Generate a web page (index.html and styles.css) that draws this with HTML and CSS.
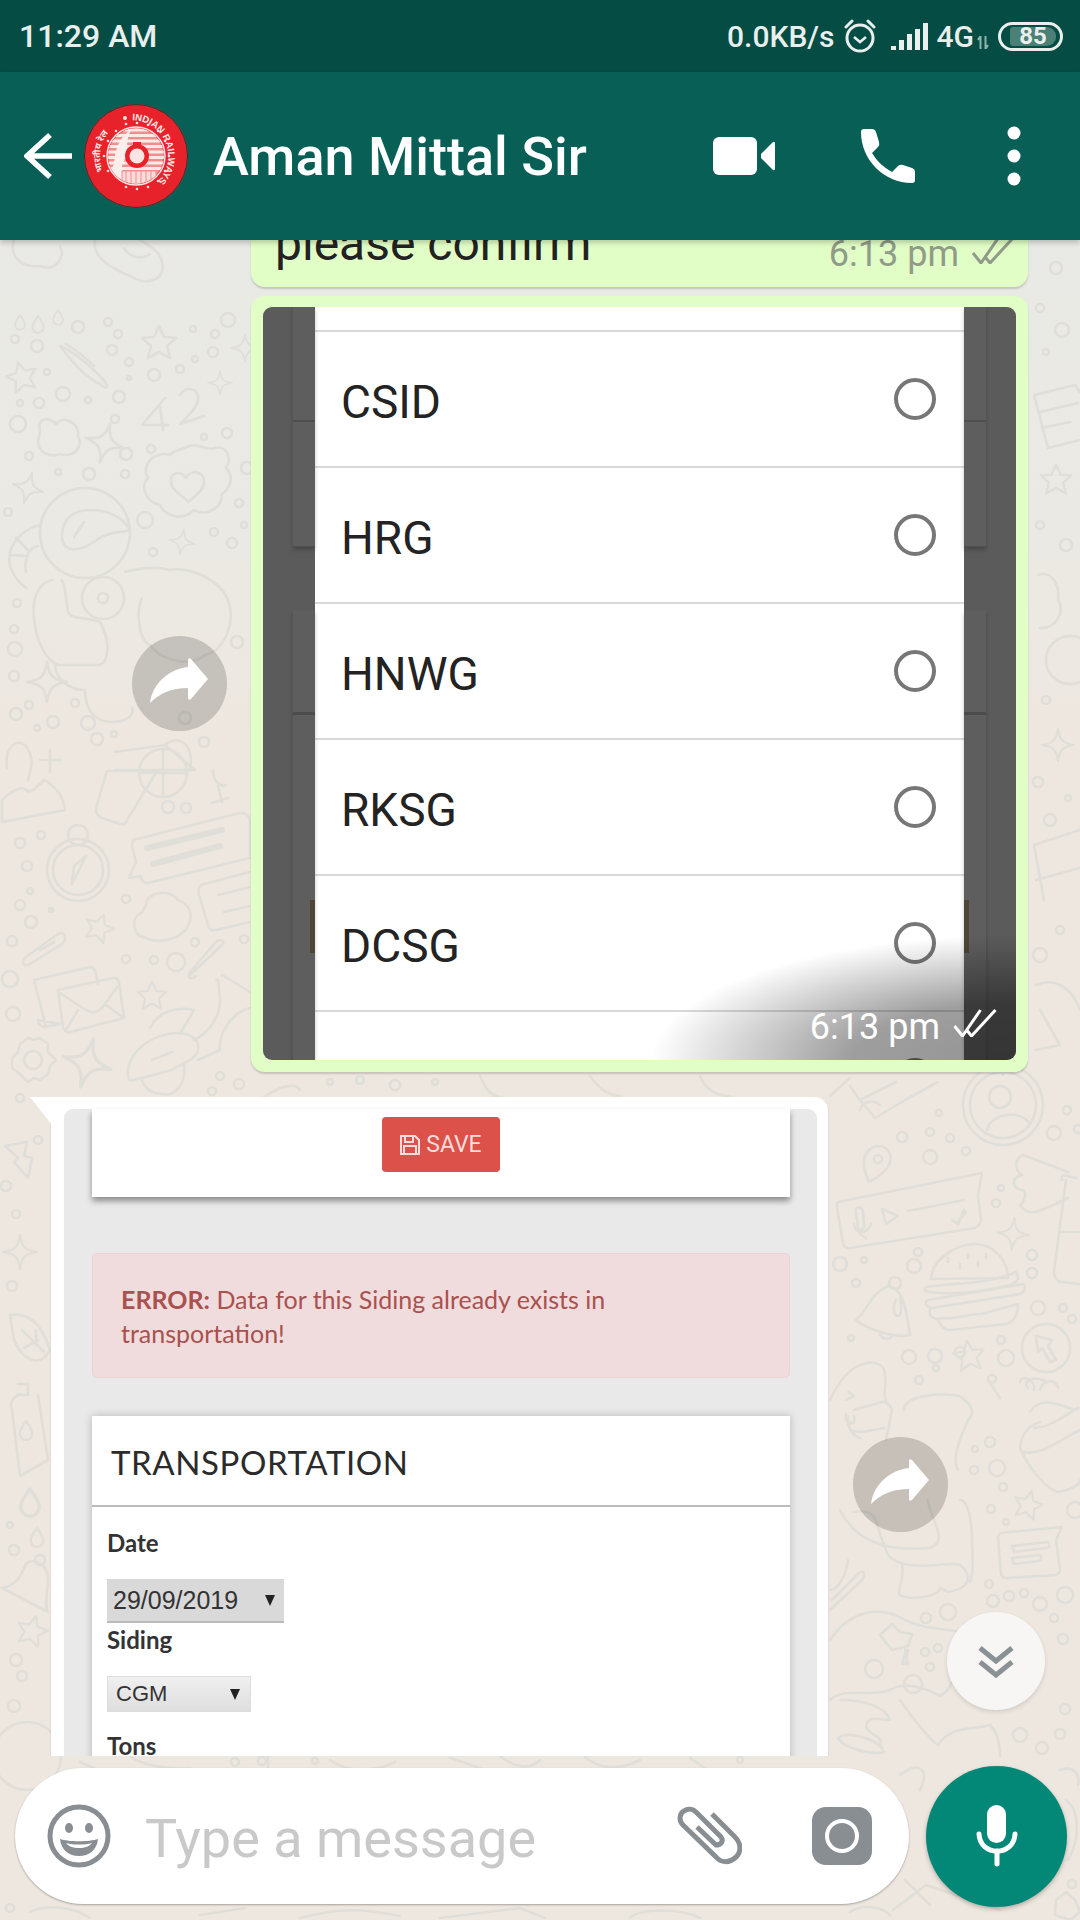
FILE: index.html
```html
<!DOCTYPE html>
<html>
  <head>
    <meta name="viewport" content="width=device-width, initial-scale=1.0">
    <title>Aman Mittal Sir</title>
    <link rel="stylesheet" href="styles.css">
  </head>
  <body>
    <div class="screen">

      <!-- chat wallpaper doodles, drawn in page coordinates -->
      <svg class="wallpaper" viewBox="0 0 1080 1920" aria-hidden="true">
        <defs>
          <path id="star" d="M0 -17 L5 -6 L17 -5 L8 3 L11 15 L0 9 L-11 15 L-8 3 L-17 -5 L-5 -6 Z"/>
          <path id="spark" d="M0 -20 C2 -6 6 -2 20 0 C6 2 2 6 0 20 C-2 6 -6 2 -20 0 C-6 -2 -2 -6 0 -20 Z"/>
          <path id="drop" d="M0 -10 C5 -3 7 0 7 4 A7 7 0 0 1 -7 4 C-7 0 -5 -3 0 -10 Z"/>
        </defs>

        <!-- left column, upper part -->
        <path d="M14 240 C8 258 24 268 40 266 C55 272 66 258 60 246"/>
        <path d="M95 240 C92 256 110 268 130 276 C150 288 166 278 162 262 C160 252 150 246 140 240"/>
        <path d="M124 248 C130 258 142 260 150 254"/>
        <use href="#drop" transform="translate(20 322) scale(.7)"/><use href="#drop" transform="translate(38 324) scale(.8)"/><use href="#drop" transform="translate(58 317) scale(.7)"/>
        <circle cx="78" cy="327" r="6"/><circle cx="37" cy="346" r="6"/><circle cx="15" cy="339" r="4"/><circle cx="228" cy="320" r="7"/><circle cx="108" cy="322" r="4"/><circle cx="118" cy="334" r="4"/><circle cx="193" cy="329" r="3"/><circle cx="215" cy="334" r="4"/><circle cx="213" cy="352" r="5"/><circle cx="112" cy="350" r="5"/><circle cx="129" cy="362" r="4"/><circle cx="195" cy="359" r="3"/><circle cx="180" cy="369" r="4"/><circle cx="154" cy="375" r="6"/><circle cx="129" cy="378" r="2"/><circle cx="47" cy="372" r="3"/><circle cx="63" cy="394" r="7"/><circle cx="39" cy="403" r="5"/><circle cx="20" cy="403" r="3"/><circle cx="88" cy="400" r="3"/><circle cx="119" cy="397" r="6"/><circle cx="18" cy="424" r="8"/><circle cx="115" cy="419" r="4"/><circle cx="204" cy="437" r="3"/><circle cx="227" cy="433" r="5"/><circle cx="126" cy="454" r="6"/><circle cx="151" cy="449" r="4"/><circle cx="29" cy="456" r="4"/><circle cx="58" cy="472" r="3"/><circle cx="89" cy="474" r="6"/><circle cx="125" cy="474" r="4"/><circle cx="247" cy="468" r="6"/><circle cx="239" cy="503" r="4"/><circle cx="145" cy="520" r="8"/><circle cx="8" cy="512" r="4"/><circle cx="214" cy="532" r="4"/><circle cx="244" cy="525" r="3"/><circle cx="232" cy="543" r="5"/><circle cx="153" cy="552" r="4"/><circle cx="17" cy="603" r="4"/><circle cx="14" cy="629" r="4"/><circle cx="15" cy="649" r="7"/><circle cx="237" cy="642" r="6"/><circle cx="14" cy="676" r="5"/><circle cx="75" cy="703" r="4"/><circle cx="29" cy="705" r="4"/><circle cx="16" cy="714" r="6"/><circle cx="53" cy="722" r="6"/><circle cx="88" cy="723" r="7"/><circle cx="37" cy="728" r="3"/><circle cx="114" cy="734" r="3"/><circle cx="97" cy="739" r="6"/><circle cx="185" cy="718" r="6"/><circle cx="204" cy="742" r="5"/>
        <path d="M60 346 C70 350 86 362 100 376 C110 386 108 392 100 384 C86 378 70 360 60 346 Z M66 344 C76 350 86 358 94 366"/>
        <use href="#star" transform="translate(159 343)"/><use href="#star" transform="translate(22 377) rotate(-15) scale(.9)"/>
        <use href="#spark" transform="translate(220 383) scale(.6)"/><use href="#spark" transform="translate(105 443) rotate(15)"/><use href="#spark" transform="translate(28 488) rotate(15) scale(.8)"/><use href="#spark" transform="translate(182 542) rotate(10) scale(.65)"/><use href="#spark" transform="translate(47 682)"/><use href="#spark" transform="translate(245 348) scale(.7)"/>
        <path d="M165 398 L142 425 L168 425 M160 406 L163 430 M180 395 C185 385 200 388 198 400 C196 410 186 418 180 424 L204 416"/>
        <path d="M40 430 C36 416 52 418 56 424 C64 414 80 424 78 436 C84 448 72 458 60 454 C50 458 38 452 38 442 Z"/>
        <path d="M185 448 C195 440 205 452 215 448 C228 445 232 460 226 468 C236 478 228 490 222 494 C222 510 205 516 194 510 C182 522 165 516 160 505 C145 502 140 485 148 478 C140 465 155 450 170 455 C174 450 180 450 185 448 Z"/>
        <path d="M186 478 C178 468 168 474 172 486 C176 494 186 498 188 502 C196 496 206 488 204 480 C202 470 190 470 186 478 Z"/>
        <circle cx="85" cy="533" r="45"/>
        <path d="M62 535 C62 519 74 510 90 510 C108 510 123 517 130 530 C118 533 106 532 95 541 C82 551 62 555 62 535 Z M74 537 L84 522"/>
        <path d="M40 525 C18 530 6 550 10 566 C12 574 20 584 26 588 M38 546 C28 548 24 560 26 572 M10 555 L26 556 M16 538 L28 550"/>
        <path d="M52 580 C36 584 32 602 34 618 C36 642 46 660 58 665 L100 665 C110 660 110 640 100 622 C84 616 72 620 68 612 C66 600 66 590 62 580"/>
        <circle cx="103" cy="598" r="21"/><circle cx="103" cy="598" r="5"/>
        <path d="M125 572 C140 568 156 566 170 570 C190 566 220 580 228 600 C236 620 226 650 205 655 C190 668 160 660 150 645 C138 640 136 610 142 598"/>
        <path d="M55 665 C56 680 70 690 85 690 C85 710 95 722 112 722 C125 722 135 716 132 708"/>
        <path d="M115 752 L165 745 L195 770 L115 770 M165 745 C175 735 195 740 190 770"/>
        <path d="M7 768 C4 745 18 738 26 746 C36 760 30 770 28 780 M40 760 H60 M50 750 V772"/>

        <!-- left column, lower part -->
        <path d="M2 822 V800 C12 790 22 786 26 790 C30 794 34 790 44 780 C56 786 64 798 65 810 Z"/>
        <path d="M107 771 L96 808 C95 813 98 816 102 818 L120 824 C124 825 126 823 127 820 L157 771 M107 771 H157"/>
        <circle cx="163" cy="773" r="24"/><path d="M163 749 V797 M140 773 H186"/>
        <path d="M213 770 C213 785 225 787 226 785 M218 786 L222 802 M212 803 L228 798"/>
        <circle cx="20" cy="843" r="5"/><circle cx="41" cy="835" r="4"/><circle cx="27" cy="866" r="5"/><circle cx="30" cy="891" r="3"/><circle cx="20" cy="905" r="5"/><circle cx="51" cy="910" r="2"/><circle cx="31" cy="922" r="6"/><circle cx="12" cy="941" r="5"/><circle cx="126" cy="899" r="4"/><circle cx="195" cy="942" r="4"/><circle cx="244" cy="939" r="4"/><circle cx="126" cy="959" r="4"/><circle cx="154" cy="960" r="4"/><circle cx="176" cy="962" r="9"/><circle cx="10" cy="979" r="8"/><circle cx="13" cy="1014" r="7"/><circle cx="168" cy="807" r="6"/><circle cx="186" cy="808" r="5"/><circle cx="20" cy="1098" r="4"/><circle cx="220" cy="1076" r="4"/><circle cx="239" cy="1084" r="5"/><circle cx="212" cy="1091" r="4"/>
        <circle cx="78" cy="870" r="31"/><circle cx="78" cy="870" r="25"/><circle cx="78" cy="835" r="10"/>
        <path d="M86 856 L72 884 L74 866 Z M74 866 L86 856"/>
        <path d="M133 840 L240 813 C246 812 249 816 250 820 V858 L148 883 C144 884 141 880 141 876 L129 878 L136 862 L132 846 Z"/>
        <path d="M147 848 L222 830 M153 864 L220 846" class="wallpaper__thick"/>
        <path d="M250 872 L204 884 C199 885 197 890 199 895 L208 925 C209 930 212 931 216 930 L250 922"/>
        <path d="M218 895 L250 887 M224 912 L250 906"/>
        <path d="M146 905 C146 892 170 888 178 900 C190 904 194 916 188 925 C184 938 160 945 146 938 C132 936 130 918 142 912 Z"/>
        <use href="#star" transform="translate(99 928) rotate(20) scale(.85)"/><use href="#star" transform="translate(152 996) scale(.85)"/>
        <path d="M26 957 L58 934 C64 930 68 938 62 944 L30 964 C24 968 20 962 26 957 Z M40 950 L54 942"/>
        <path d="M34 980 L90 967 C94 967 95 970 96 974 L98 984 M60 1024 L46 1027 C40 1027 38 1024 38 1020 Z M34 980 L46 1027"/>
        <path d="M58 990 L113 978 C117 977 118 980 119 982 L124 1018 L70 1032 C66 1033 64 1030 63 1027 Z"/>
        <path d="M58 992 L86 1010 C92 1014 98 1012 102 1008 L118 986 M66 1030 L78 1010 M106 1005 L124 1018"/>
        <path d="M20 1044 L28 1038 L34 1040 L40 1038 L48 1044 L48 1052 L56 1060 L50 1066 L48 1074 L40 1080 L34 1078 L28 1082 L20 1074 L12 1068 L12 1058 L18 1052 Z"/><circle cx="33" cy="1060" r="9"/>
        <use href="#spark" transform="translate(87 1063) rotate(15) scale(1.25)"/>
        <path d="M150 1028 C158 1012 176 1006 194 1010 L180 1034 M128 1076 C126 1060 140 1040 168 1034 C190 1030 200 1040 198 1050 C196 1060 180 1064 172 1070 L134 1080 C130 1081 128 1080 128 1076 Z M152 1060 L172 1052"/>
        <path d="M142 1080 C146 1092 158 1095 170 1094 C180 1090 186 1080 184 1064"/>
        <path d="M220 1050 C218 1034 232 1012 250 1008 M220 1050 L198 1060 M194 1040 C206 1034 220 1020 220 1000 C218 986 220 978 216 980 M250 992 L222 975 M190 975 L222 945 C226 942 220 938 216 942 L190 972 C186 978 192 980 196 976"/>

        <!-- thin strip left of the lower bubble -->
        <path d="M5 1146 L27 1142 L24 1156 L32 1158 L28 1178 L14 1162 L18 1158 Z"/>
        <circle cx="6" cy="1186" r="5"/><circle cx="16" cy="1214" r="4"/><circle cx="12" cy="1286" r="5"/><circle cx="38" cy="1140" r="4"/>
        <use href="#spark" transform="translate(20 1252) scale(.85)"/>
        <path d="M10 1315 C30 1312 42 1325 50 1350 C38 1372 20 1355 14 1340 Z M22 1330 L44 1352 M36 1330 V1345 M24 1348 L38 1340"/>
        <path d="M20 1395 H28 V1384 H18 M12 1410 C9 1402 14 1396 20 1394 M38 1395 L48 1460 L20 1476 L12 1410"/>
        <use href="#drop" transform="translate(26 1430) scale(.9)"/>
        <use href="#drop" transform="translate(30 1502) scale(1.3)"/><use href="#drop" transform="translate(37 1537) scale(.9)"/>
        <circle cx="10" cy="1525" r="3"/><circle cx="14" cy="1550" r="5"/>
        <path d="M2 1588 C16 1586 22 1574 26 1564 C34 1556 48 1566 48 1578 C48 1592 44 1606 48 1612 Z"/><circle cx="40" cy="1560" r="5"/>
        <use href="#star" transform="translate(32 1631) rotate(15) scale(.9)"/>
        <circle cx="16" cy="1660" r="6"/><circle cx="22" cy="1676" r="5"/>
        <circle cx="27" cy="1756" r="34"/><circle cx="14" cy="1706" r="6"/>

        <!-- right margin, beside the green bubbles -->
        <circle cx="1056" cy="268" r="6"/><circle cx="1040" cy="308" r="4"/><circle cx="1062" cy="330" r="7"/><circle cx="1046" cy="352" r="3"/>
        <path d="M1034 395 L1075 385 L1080 392 M1040 412 L1078 403 M1042 428 L1070 422 M1034 395 L1048 448 L1080 440"/>
        <use href="#star" transform="translate(1056 480) scale(.9)"/>
        <circle cx="1040" cy="525" r="4"/><circle cx="1066" cy="545" r="6"/>
        <path d="M1038 575 C1052 570 1060 585 1058 600 C1066 610 1056 630 1040 628"/>
        <circle cx="1070" cy="660" r="24"/><circle cx="1046" cy="700" r="4"/>
        <use href="#spark" transform="translate(1058 745) scale(.8)"/>
        <circle cx="1038" cy="782" r="5"/><circle cx="1068" cy="798" r="3"/><circle cx="1050" cy="820" r="6"/>
        <path d="M1034 845 L1080 830 M1036 880 L1080 868 M1034 845 L1044 900"/>
        <circle cx="1060" cy="930" r="4"/><circle cx="1040" cy="955" r="7"/>
        <path d="M1036 985 C1060 975 1075 995 1080 1010 M1040 1010 L1060 1045 L1036 1050"/>

        <!-- under the green bubble and below it -->
        <circle cx="330" cy="1082" r="3"/><circle cx="360" cy="1080" r="4"/><circle cx="395" cy="1085" r="5"/><circle cx="435" cy="1082" r="3"/>
        <path d="M264 1097 C280 1086 296 1082 300 1090 M480 1076 C486 1090 490 1095 500 1097 M590 1076 C600 1090 608 1095 620 1096 M700 1076 C706 1090 716 1096 730 1096 M1003 1074 V1075"/>
        <path d="M850 1078 L830 1096 M896 1082 L860 1100 L850 1086"/>
        <circle cx="1003" cy="1105" r="40"/><circle cx="1003" cy="1105" r="33"/><circle cx="1000" cy="1097" r="11"/><path d="M987 1130 C990 1114 1020 1108 1030 1124"/>

        <!-- right of the lower bubble -->
        <circle cx="939" cy="1113" r="3"/><circle cx="902" cy="1137" r="5"/><circle cx="930" cy="1132" r="4"/><circle cx="950" cy="1138" r="4"/><circle cx="930" cy="1157" r="7"/><circle cx="966" cy="1151" r="4"/><circle cx="1067" cy="1110" r="4"/><circle cx="1054" cy="1133" r="7"/><circle cx="1078" cy="1129" r="4"/>
        <path d="M860 1110 C862 1100 875 1100 880 1105 M860 1100 L875 1118 L905 1100 L938 1082"/>
        <path d="M878 1146 C888 1146 892 1155 890 1162 C888 1170 878 1178 869 1182 C864 1172 862 1160 866 1154 C870 1148 874 1146 878 1146 Z"/><circle cx="878" cy="1159" r="4"/>
        <path d="M838 1202 L982 1173 L978 1195 L981 1220 C981 1224 978 1226 975 1228 L850 1248 C846 1249 844 1246 843 1243 L837 1208 C836 1204 837 1203 838 1202 Z"/>
        <path d="M856 1212 C854 1206 862 1206 863 1212 L864 1226 C864 1230 860 1232 858 1228 Z M854 1224 C855 1234 866 1236 871 1224 M860 1234 L866 1238 M882 1209 L898 1216 L886 1224 Z M908 1211 L964 1200 M952 1220 L958 1224 L964 1210 M958 1222 L966 1212"/>
        <circle cx="1001" cy="1188" r="3"/><circle cx="996" cy="1203" r="4"/>
        <path d="M1068 1172 L1023 1155 C1012 1160 1016 1172 1022 1175 C1010 1178 1012 1188 1022 1190 C1028 1192 1024 1202 1020 1205 C1028 1216 1034 1215 1068 1198"/>
        <path d="M1066 1180 L1054 1272 C1054 1276 1056 1280 1060 1282 L1080 1284 M1062 1180 C1060 1172 1066 1176 1076 1178 M1060 1232 H1080"/>
        <use href="#spark" transform="translate(1013 1234) rotate(5) scale(.8)"/>
        <circle cx="1032" cy="1255" r="5"/><circle cx="1032" cy="1273" r="5"/><circle cx="918" cy="1252" r="4"/><circle cx="840" cy="1264" r="7"/><circle cx="864" cy="1260" r="3"/><circle cx="914" cy="1266" r="7"/><circle cx="856" cy="1283" r="4"/>
        <path d="M931 1279 C932 1260 955 1244 975 1244 C995 1244 1008 1262 1008 1278 Z"/>
        <path d="M926 1287 C960 1282 985 1285 1016 1272 C1020 1278 1018 1282 1010 1285 C990 1290 960 1296 930 1292 C924 1292 924 1288 926 1287 Z"/>
        <path d="M928 1300 L1024 1284 C1026 1290 1024 1292 1020 1294 L932 1308 C926 1308 924 1302 928 1300 Z"/>
        <path d="M930 1310 C928 1316 936 1322 942 1318 C955 1320 965 1314 982 1314 L1018 1304 C1018 1316 1014 1322 1006 1324 L950 1330 C942 1330 938 1322 938 1318"/>
        <path d="M948 1258 V1262 M960 1264 V1268 M968 1254 V1258 M978 1262 V1266 M986 1254 V1258"/>
        <circle cx="895" cy="1283" r="6"/><path d="M856 1320 C868 1310 870 1294 888 1286 C904 1288 906 1310 910 1335 C900 1338 870 1332 856 1320 Z"/><path d="M880 1335 C884 1340 890 1340 892 1336"/>
        <path d="M896 1300 C892 1308 894 1316 898 1316 C902 1316 902 1304 900 1298"/>
        <circle cx="1038" cy="1308" r="7"/><circle cx="1063" cy="1308" r="4"/><circle cx="1072" cy="1319" r="4"/><circle cx="851" cy="1338" r="3"/>
        <circle cx="1046" cy="1348" r="24"/><path d="M1036 1336 L1052 1340 L1048 1346 L1056 1360 L1050 1362 L1042 1348 L1038 1352 Z"/>
        <circle cx="1001" cy="1340" r="4"/><circle cx="1006" cy="1358" r="8"/><circle cx="935" cy="1356" r="7"/><circle cx="909" cy="1357" r="7"/><circle cx="960" cy="1352" r="5"/><circle cx="936" cy="1368" r="3"/><circle cx="992" cy="1379" r="4"/><circle cx="919" cy="1380" r="4"/>
        <use href="#star" transform="translate(969 1356) rotate(-8) scale(.9)"/>
        <path d="M830 1400 C850 1356 880 1358 884 1370 C888 1380 882 1396 886 1400 M848 1392 L854 1396 L846 1400"/>
        <path d="M904 1410 C904 1396 936 1392 960 1396 C972 1405 976 1412 968 1420 C958 1442 952 1460 958 1470"/>
        <path d="M988 1380 L1000 1398 M1020 1382 C1022 1374 1036 1380 1034 1390 M1040 1390 C1042 1380 1056 1378 1058 1388"/>
        <path d="M1028 1388 C1020 1378 1040 1376 1046 1382"/>

        <!-- dog, card and cupcake -->
        <path d="M854 1410 L882 1402 C888 1401 890 1406 892 1410 L886 1440 M850 1430 C860 1434 872 1430 884 1428 M848 1416 C846 1424 852 1436 860 1438"/>
        <path d="M846 1414 L846 1420 C850 1425 856 1425 854 1416"/>
        <circle cx="990" cy="1442" r="5"/><circle cx="975" cy="1449" r="3"/><circle cx="974" cy="1470" r="4"/><circle cx="997" cy="1468" r="8"/><circle cx="1003" cy="1487" r="4"/><circle cx="991" cy="1509" r="4"/><circle cx="1006" cy="1522" r="3"/><circle cx="1075" cy="1510" r="8"/>
        <use href="#star" transform="translate(1028 1505) rotate(15) scale(.85)"/>
        <path d="M1040 1422 C1020 1428 1018 1450 1022 1452 C1030 1470 1048 1490 1058 1492 C1070 1490 1080 1485 1080 1480 M1024 1452 C1040 1456 1060 1440 1080 1430 M1030 1412 C1040 1395 1060 1405 1075 1410 M1034 1428 C1050 1428 1070 1412 1078 1408"/>
        <path d="M1000 1533 L1062 1527 L1056 1540 L1060 1570 C1060 1574 1058 1574 1056 1575 L1006 1578 C1002 1578 1002 1576 1001 1574 L998 1537 Z M1012 1546 L1048 1542 C1050 1546 1050 1548 1046 1548 L1014 1552 Z M1012 1558 L1040 1555 C1042 1558 1042 1560 1038 1561 L1014 1564 Z"/>
        <path d="M853 1512 C862 1512 868 1508 876 1520 C878 1530 882 1540 888 1555 C905 1575 950 1560 960 1565 C972 1575 972 1588 948 1592 L940 1588 C938 1598 908 1600 900 1595 C896 1590 905 1580 902 1565 M960 1500 C970 1500 972 1530 972 1540 C972 1552 975 1570 970 1582"/>
        <path d="M840 1510 C860 1550 900 1550 930 1548 C950 1540 930 1520 928 1500"/>

        <path d="M830 1590 C838 1590 846 1576 848 1560 M832 1600 L860 1572 C866 1570 865 1578 860 1582 L830 1610"/>
        <circle cx="989" cy="1584" r="4"/><circle cx="993" cy="1601" r="6"/><circle cx="1009" cy="1596" r="5"/><circle cx="1024" cy="1593" r="4"/><circle cx="1040" cy="1604" r="7"/><circle cx="1065" cy="1595" r="8"/><circle cx="1054" cy="1618" r="4"/><circle cx="1063" cy="1639" r="5"/><circle cx="926" cy="1618" r="5"/><circle cx="948" cy="1612" r="8"/>
        <path d="M830 1640 C850 1610 880 1605 905 1620 C925 1630 945 1628 960 1632 C966 1660 952 1690 940 1696 C930 1690 905 1680 890 1690 C870 1698 845 1686 830 1700"/>
        <path d="M880 1635 L892 1624 L900 1632 L912 1634 L908 1646 L892 1650 Z"/><path d="M905 1648 L908 1664 L902 1664 L906 1650 M908 1650 L906 1662"/>
        <circle cx="925" cy="1652" r="4"/><circle cx="938" cy="1648" r="4"/><circle cx="930" cy="1667" r="4"/><circle cx="874" cy="1669" r="9"/><circle cx="913" cy="1684" r="9"/><circle cx="1065" cy="1709" r="5"/>
        <path d="M840 1700 C860 1700 885 1705 890 1720 C878 1720 870 1715 866 1725 C866 1735 885 1736 880 1745 M900 1700 C910 1715 930 1740 938 1745 C950 1725 975 1730 990 1725 C1000 1735 1000 1750 1000 1756"/>
        <path d="M838 1738 C850 1730 880 1740 884 1752 C875 1755 845 1750 838 1738 Z"/>
        <circle cx="1020" cy="1735" r="7"/><circle cx="1042" cy="1748" r="6"/><circle cx="1060" cy="1734" r="5"/>

        <!-- strip under the lower bubble and round the composer -->
        <path d="M80 1762 L98 1770 M130 1756 C140 1765 170 1770 190 1768 M268 1757 V1770 M330 1760 C350 1775 380 1770 395 1762 M450 1758 L480 1768 M500 1756 C515 1768 530 1770 540 1760 M585 1757 C600 1770 620 1770 640 1760 M690 1758 L705 1768"/>
        <circle cx="235" cy="1762" r="4"/><circle cx="262" cy="1761" r="4"/><circle cx="315" cy="1761" r="3"/><circle cx="740" cy="1760" r="3"/>
        <path d="M900 1775 C920 1760 930 1770 920 1790 M905 1880 L930 1905 M893 1910 L926 1885 L1000 1910 M850 1912 C860 1905 880 1905 890 1915"/>
        <path d="M1060 1770 C1075 1765 1080 1775 1078 1785 M1066 1800 C1080 1810 1080 1840 1068 1860"/><circle cx="1072" cy="1884" r="4"/>
        <path d="M1056 1900 L1066 1892 L1075 1900 L1080 1912 L1070 1920 L1055 1915 Z"/>
        <path d="M30 1912 C45 1905 70 1905 90 1918 M200 1915 L245 1908 M300 1918 C340 1908 360 1908 400 1916 M440 1918 L520 1908 L545 1918 M630 1918 C640 1908 680 1908 700 1918"/>
        <circle cx="10" cy="1908" r="4"/>
      </svg>

      <div class="status">
        <span class="status__time">11:29 AM</span>
        <div class="status__right">
          <span class="status__net">0.0KB/s</span>
          <svg class="ic-alarm" width="34" height="34" viewBox="0 0 34 34">
            <circle cx="17" cy="19" r="13" fill="none" stroke="#e8efed" stroke-width="3"/>
            <path d="M11 18 L17 23 L23 18" fill="none" stroke="#e8efed" stroke-width="2.5"/>
            <path d="M3 8 L9 2 M31 8 L25 2" stroke="#e8efed" stroke-width="3" stroke-linecap="round"/>
          </svg>
          <svg class="ic-signal" width="38" height="27" viewBox="0 0 38 27">
            <path d="M0 23h5v4H0z M8 17h5v10H8z M16 11h5v16h-5z M24 6h5v21h-5z M32 0h5v27h-5z" fill="#e8efed"/>
          </svg>
          <span class="status__net status__net--4g">4G</span>
          <svg class="ic-updown" width="12" height="13" viewBox="0 0 12 13">
            <path d="M1 4 L3.5 0 V13 M11 9 L8.5 13 V0" fill="none" stroke="#8fb2aa" stroke-width="2"/>
          </svg>
          <div class="battery">
            <div class="battery__fill">85</div>
          </div>
        </div>
      </div>

      <header class="topbar">
        <svg class="ic-back" width="48" height="46" viewBox="0 0 48 46">
          <path d="M48 23 H3 M26 2 L3 23 L26 44" fill="none" stroke="#fff" stroke-width="5.5"/>
        </svg>
        <svg class="avatar" width="104" height="104" viewBox="0 0 104 104">
          <defs>
            <path id="arcRight" d="M48.2 16.2 A36 36 0 1 1 48.1 16.2"/>
            <path id="arcLeft" d="M19.4 67.2 A36 36 0 0 1 39.7 18.2"/>
            <clipPath id="wheel"><circle cx="52" cy="52" r="28"/></clipPath>
          </defs>
          <circle cx="52" cy="52" r="52" fill="#e8222b"/>
          <circle cx="52" cy="52" r="51.5" fill="none" stroke="#1d3a36" stroke-width="1"/>
          <text class="avatar__text"><textPath href="#arcRight">INDIAN RAILWAYS</textPath></text>
          <text class="avatar__text avatar__text--hi"><textPath href="#arcLeft">भारतीय रेल</textPath></text>
          <g fill="#fbe3e1">
            <circle cx="41" cy="14" r="2"/><circle cx="42" cy="20" r="1.3"/><circle cx="53" cy="19" r="1.3"/><circle cx="64" cy="21" r="1.3"/><circle cx="74" cy="27" r="1.3"/><circle cx="81" cy="37" r="1.3"/><circle cx="85" cy="52" r="1.3"/><circle cx="81" cy="67" r="1.3"/><circle cx="74" cy="77" r="1.3"/><circle cx="64" cy="83" r="1.3"/><circle cx="53" cy="85" r="1.3"/><circle cx="42" cy="83" r="1.3"/><circle cx="32" cy="27" r="1.3"/><circle cx="24" cy="37" r="1.3"/><circle cx="20" cy="52" r="1.3"/><circle cx="24" cy="67" r="1.3"/>
          </g>
          <circle cx="52" cy="52" r="29" fill="none" stroke="#fbe3e1" stroke-width="1.5"/>
          <g clip-path="url(#wheel)">
            <circle cx="52" cy="52" r="28" fill="#ee8f8d"/>
            <path d="M20 26h64M20 31.500h64M20 37h64M20 42.500h64M20 48h64M20 53.500h64M20 59h64M20 64.500h64" stroke="#fbe9e8" stroke-width="3"/>
            <path d="M20 81 L30 60 C31 44 36 32 48 25 C44 30 42 40 44 48 L38 62 L40 81 Z" fill="#fbeeec"/>
            <path d="M38 67 H72 V81 H38 Z M42 67 V81 M47 67 V81 M52 67 V81 M57 67 V81 M62 67 V81 M67 67 V81" fill="#fbdcda" stroke="#ee8f8d" stroke-width="1"/>
          </g>
          <circle cx="53" cy="52" r="12" fill="#e8222b"/>
          <circle cx="53" cy="52" r="7.500" fill="#f8e4e3"/>
          <path d="M49 38 H57 V41 H49 Z" fill="#e8222b"/>
        </svg>
        <div class="topbar__name">Aman Mittal Sir</div>
        <svg class="ic-video" width="62" height="38" viewBox="0 0 62 38">
          <rect x="0" y="0" width="44" height="38" rx="6" fill="#fff"/>
          <path d="M48 17 L60 5 Q62 4 62 7 V31 Q62 34 60 33 L48 21 Z" fill="#fff"/>
        </svg>
        <svg class="ic-phone" width="54" height="54" viewBox="0 0 54 54">
          <path d="M3 0 H11 Q14 0 15 3 L18 13 Q19 16 17 18 L11 24 Q18 36 31 43 L37 37 Q39 35 42 36 L51 39 Q54 40 54 43 V51 Q54 54 51 54 C23 54 0 31 0 3 Q0 0 3 0 Z" fill="#fff"/>
        </svg>
        <svg class="ic-menu" width="14" height="60" viewBox="0 0 14 60">
          <circle cx="7" cy="7" r="6.500" fill="#fff"/><circle cx="7" cy="30" r="6.500" fill="#fff"/><circle cx="7" cy="53" r="6.500" fill="#fff"/>
        </svg>
      </header>

      <main class="messages">
        <div class="bubble bubble--out bubble--text">
          <span class="bubble__text">please confirm</span>
          <span class="meta">
            6:13 pm
            <svg width="44" height="28" viewBox="0 0 44 28"><path d="M1 17 L9 27 L27 1 M14 22 L18 27 L42 1" fill="none" stroke="currentColor" stroke-width="3"/></svg>
          </span>
        </div>

        <div class="bubble bubble--out bubble--photo">
          <div class="photo">
            <div class="photo__side photo__side--left">
              <div class="ghost-card ghost-card--a"></div>
              <div class="ghost-card ghost-card--b"></div>
            </div>
            <div class="sheet">
              <div class="sheet__gap"></div>
              <div class="sheet__row"><span>CSID</span><i class="radio"></i></div>
              <div class="sheet__row"><span>HRG</span><i class="radio"></i></div>
              <div class="sheet__row"><span>HNWG</span><i class="radio"></i></div>
              <div class="sheet__row"><span>RKSG</span><i class="radio"></i></div>
              <div class="sheet__row"><span>DCSG</span><i class="radio"></i></div>
              <div class="sheet__row"><span></span><i class="radio"></i></div>
            </div>
            <div class="photo__side photo__side--right">
              <div class="ghost-card ghost-card--a"></div>
              <div class="ghost-card ghost-card--b"></div>
            </div>
            <div class="photo__scrim"></div>
            <span class="meta meta--photo">
              6:13 pm
              <svg width="45" height="28" viewBox="0 0 44 28"><path d="M1 17 L9 27 L27 1 M14 22 L18 27 L42 1" fill="none" stroke="currentColor" stroke-width="3"/></svg>
            </span>
          </div>
        </div>

        <div class="bubble bubble--in">
          <div class="shot">
            <div class="shot__card shot__card--top">
              <div class="save-btn">
                <svg width="20" height="20" viewBox="0 0 20 20"><path d="M1 1 H15 L19 5 V19 H1 Z M5 1 V7 H13 V1 M4 19 V11 H16 V19" fill="none" stroke="#f7dedc" stroke-width="2"/></svg>
                SAVE
              </div>
            </div>
            <div class="shot__error"><b>ERROR:</b> Data for this Siding already exists in<br>transportation!</div>
            <div class="shot__card shot__card--form">
              <div class="shot__title">TRANSPORTATION</div>
              <div class="shot__body">
                <div class="field-label">Date</div>
                <div class="fake-select fake-select--date"><span>29/09/2019</span><i></i></div>
                <div class="field-label field-label--tight">Siding</div>
                <div class="fake-select fake-select--siding"><span>CGM</span><i></i></div>
                <div class="field-label field-label--last">Tons</div>
              </div>
            </div>
          </div>
        </div>

        <div class="forward forward--one">
          <svg width="95" height="95" viewBox="0 0 95 95"><path d="M18 67 C21 46 38 33 56 31 V24 Q56 21 59 23 L76 43 L59 63 Q56 65 56 62 V52 C40 52 28 57 18 67 Z" fill="#fff"/></svg>
        </div>
        <div class="forward forward--two">
          <svg width="95" height="95" viewBox="0 0 95 95"><path d="M18 67 C21 46 38 33 56 31 V24 Q56 21 59 23 L76 43 L59 63 Q56 65 56 62 V52 C40 52 28 57 18 67 Z" fill="#fff"/></svg>
        </div>
        <div class="scroll-down">
          <svg width="36" height="32" viewBox="0 0 36 32"><path d="M2 2 L18 15 L34 2 M2 16 L18 29 L34 16" fill="none" stroke="#8a9296" stroke-width="5"/></svg>
        </div>
      </main>

      <footer class="composer">
        <div class="composer__bar">
          <svg class="ic-emoji" width="64" height="64" viewBox="0 0 64 64">
            <circle cx="32" cy="32" r="29" fill="none" stroke="#898e93" stroke-width="5"/>
            <ellipse cx="22" cy="24" rx="4" ry="5" fill="#898e93"/><ellipse cx="42" cy="24" rx="4" ry="5" fill="#898e93"/>
            <path d="M13 35 C22 38 42 38 51 35 C50 46 42 52 32 52 C22 52 14 46 13 35 Z" fill="#898e93"/>
            <path d="M19 39 C26 41 38 41 45 39 C43 42 38 44 32 44 C26 44 21 42 19 39 Z" fill="#fff"/>
          </svg>
          <div class="composer__placeholder">Type a message</div>
          <svg class="ic-clip" width="66" height="60" viewBox="676 1807 66 60">
            <path d="M712 1815 L735 1838 C743 1846 740 1855 735 1859 C729 1864 721 1864 716 1858 L683 1826 C678 1821 680 1814 684 1812 C688 1809 693 1810 696 1813 L721 1838 C724 1842 721 1846 716 1846 L697 1828" fill="none" stroke="#898e93" stroke-width="5"/>
          </svg>
          <div class="ic-camera"><i></i></div>
        </div>
        <div class="composer__mic">
          <svg width="42" height="62" viewBox="0 0 42 62">
            <rect x="11" y="0" width="19" height="38" rx="9.5" fill="#fff"/>
            <path d="M3 29 C4 52 38 52 39 29" fill="none" stroke="#fff" stroke-width="5" stroke-linecap="round"/>
            <path d="M21 46 V59" stroke="#fff" stroke-width="5" stroke-linecap="round"/>
          </svg>
        </div>
      </footer>
    </div>
  </body>
</html>
```

FILE: styles.css
```css
* {
  box-sizing: border-box;
}
html, body {
  margin: 0;
  padding: 0;
}
body {
  font-family: Roboto, "Liberation Sans", sans-serif;
  color: #222;
}

.screen {
  position: relative;
  display: flex;
  flex-direction: column;
  width: 1080px;
  height: 1920px;
  overflow: hidden;
  background: linear-gradient(#e9eae5 240px, #ece9e3 600px, #eee7df 760px);
}

.wallpaper {
  position: absolute;
  left: 0;
  top: 0;
  width: 1080px;
  height: 1920px;
  fill: none;
  stroke: #e0ded8;
  stroke-width: 2.6;
  stroke-linecap: round;
  stroke-linejoin: round;
}
.wallpaper__thick {
  stroke-width: 6;
}

/* status bar */
.status {
  position: relative;
  display: flex;
  align-items: center;
  justify-content: space-between;
  height: 72px;
  padding: 0 17px 0 19px;
  background: #054c44;
  color: #e8efed;
}
.status__time {
  font-size: 32px;
  font-weight: 500;
  padding-bottom: 1px;
}
.status__right {
  display: flex;
  align-items: center;
}
.status__net {
  font-size: 30px;
  font-weight: 500;
}
.status__net--4g {
  margin-left: 8px;
  margin-right: 3px;
}
.ic-alarm {
  margin-left: 8px;
  margin-top: -1px;
}
.ic-signal {
  margin-left: 14px;
}
.ic-updown {
  margin-top: 12px;
}
.battery {
  display: flex;
  align-items: center;
  width: 65px;
  height: 29px;
  margin-left: 9px;
  padding: 0 4px 0 9px;
  border: 3px solid #e8efed;
  border-radius: 15px;
}
.battery__fill {
  flex: 1;
  height: 19px;
  border-radius: 3px 9px 9px 3px;
  background: #4a8076;
  font-size: 24px;
  font-weight: 700;
  line-height: 19px;
  text-align: center;
}

/* chat header */
.topbar {
  position: relative;
  z-index: 2;
  display: flex;
  align-items: center;
  height: 168px;
  padding-left: 24px;
  background: #085f55;
  box-shadow: 0 3px 5px rgba(0, 0, 0, .2);
}
.avatar {
  margin-left: 12px;
}
.avatar__text {
  font-family: "Liberation Sans", sans-serif;
  font-size: 9.5px;
  font-weight: 700;
  fill: #fbe9e8;
}
.avatar__text--hi {
  font-family: "Noto Sans", sans-serif;
  font-size: 9px;
}
.topbar__name {
  margin-left: 25px;
  font-size: 54px;
  font-weight: 500;
  color: #fff;
  white-space: nowrap;
  width: 500px;
}
.ic-phone {
  margin-left: 86px;
}
.ic-menu {
  margin-left: 92px;
}

/* conversation */
.messages {
  position: relative;
  display: flex;
  flex-direction: column;
  height: 1516px;
  overflow: hidden;
}
.bubble {
  width: 777px;
  border-radius: 14px;
  box-shadow: 0 2px 2px rgba(0, 0, 0, .16);
}
.bubble--out {
  margin-left: 251px;
  background: #e1fec6;
}
.bubble--text {
  display: flex;
  flex-shrink: 0;
  align-items: flex-end;
  justify-content: space-between;
  height: 47px;
  padding: 0 12px 0 24px;
  border-radius: 0 0 14px 14px;
}
.bubble__text {
  margin-bottom: 19px;
  font-size: 48px;
  line-height: 48px;
  white-space: nowrap;
}
.meta {
  display: flex;
  align-items: flex-start;
  gap: 13px;
  margin-bottom: 15px;
  font-size: 36px;
  line-height: 36px;
  color: #909b88;
  white-space: nowrap;
}
.bubble--photo {
  flex-shrink: 0;
  margin-top: 9px;
  padding: 11px 12px 12px;
}

/* first screenshot: the radio list */
.photo {
  position: relative;
  display: flex;
  height: 753px;
  overflow: hidden;
  border-radius: 9px;
  background: #5b5b5b;
}
.photo__side {
  width: 52px;
  padding-left: 30px;
}
.photo__side--right {
  padding-left: 0;
  padding-right: 30px;
}
.ghost-card {
  position: relative;
  background: #5e5e5e;
  box-shadow: 0 3px 4px rgba(0, 0, 0, .22);
}
.ghost-card--a {
  height: 240px;
  border-bottom: 1px solid #505050;
}
.ghost-card--a::after {
  content: "";
  display: block;
  height: 113px;
  border-bottom: 2px solid #4f4f4f;
}
.ghost-card--b {
  height: 460px;
  margin-top: 63px;
}
.ghost-card--b::before {
  content: "";
  display: block;
  height: 102px;
  border-bottom: 3px solid #4c4c4c;
}
.ghost-card--b::after {
  content: "";
  position: absolute;
  top: 290px;
  left: 17px;
  width: 5px;
  height: 53px;
  background: #4e4634;
}
.photo__side--right .ghost-card--b::after {
  left: 0;
}
.sheet {
  width: 649px;
  overflow: hidden;
  background: #fff;
}
.sheet__gap {
  height: 25px;
  border-bottom: 2px solid #d9d9d9;
}
.sheet__row {
  display: flex;
  align-items: center;
  justify-content: space-between;
  height: 136px;
  padding: 0 28px 0 26px;
  border-bottom: 2px solid #d9d9d9;
  font-size: 46px;
  color: #232323;
}
.sheet__row span {
  padding-top: 6px;
}
.radio {
  width: 42px;
  height: 42px;
  border: 4px solid #777;
  border-radius: 50%;
}
.photo__scrim {
  position: absolute;
  right: 0;
  bottom: 0;
  width: 753px;
  height: 753px;
  background: radial-gradient(ellipse 365px 125px at 100% 100%, rgba(0, 0, 0, .42) 0, rgba(0, 0, 0, .38) 45%, rgba(0, 0, 0, 0) 100%);
}
.meta--photo {
  position: absolute;
  right: 18px;
  bottom: 15px;
  margin: 0;
  color: #fff;
}

/* incoming bubble */
.bubble--in {
  position: relative;
  flex-shrink: 0;
  height: 700px;
  margin: 25px 0 0 51px;
  padding: 12px 11px 0 13px;
  background: #fff;
  border-top-left-radius: 0;
}
.bubble--in::before {
  content: "";
  position: absolute;
  left: -21px;
  top: 0;
  width: 22px;
  height: 28px;
  background: #fff;
  clip-path: polygon(0 0, 100% 0, 100% 100%);
}

/* second screenshot: the web form */
.shot {
  height: 100%;
  padding: 0 27px 0 28px;
  border-radius: 9px 9px 0 0;
  background: #e8e9e8;
  font-family: Lato, "Open Sans", sans-serif;
}
.shot__card {
  background: #fff;
  box-shadow: 0 0 8px rgba(0, 0, 0, .22);
}
.shot__card--top {
  display: flex;
  justify-content: center;
  height: 88px;
  padding-top: 8px;
  box-shadow: 0 4px 6px rgba(0, 0, 0, .4);
}
.save-btn {
  display: flex;
  align-items: center;
  justify-content: center;
  gap: 6px;
  width: 118px;
  height: 55px;
  border-radius: 4px;
  background: #dc524b;
  font-family: Roboto, sans-serif;
  font-size: 23px;
  color: #f7dedc;
}
.shot__error {
  height: 125px;
  margin-top: 56px;
  padding: 28px 28px 0;
  border: 1px solid #ecd3d5;
  border-radius: 5px;
  background: #f0dcdd;
  font-size: 25px;
  line-height: 34px;
  color: #a9514f;
}
.shot__card--form {
  height: 400px;
  margin-top: 38px;
}
.shot__title {
  height: 91px;
  padding: 27px 19px 0;
  border-bottom: 2px solid #bbb;
  font-size: 33px;
  letter-spacing: .6px;
  line-height: 38px;
  color: #2b2b2b;
}
.shot__body {
  padding: 21px 15px 0;
}
.field-label {
  height: 30px;
  font-size: 24px;
  font-weight: 700;
  line-height: 30px;
  color: #333;
}
.field-label--tight {
  margin-top: 2px;
}
.field-label--last {
  margin-top: 19px;
}
.fake-select {
  display: flex;
  align-items: center;
  justify-content: space-between;
  font-family: "Liberation Sans", sans-serif;
  color: #333;
}
.fake-select i {
  width: 0;
  height: 0;
  border-left: 5px solid transparent;
  border-right: 5px solid transparent;
  border-top: 11px solid #222;
}
.fake-select--date {
  width: 177px;
  height: 44px;
  margin-top: 21px;
  padding: 0 9px 0 6px;
  border-bottom: 2px solid #bbb;
  background: #d9d9d9;
  font-size: 25px;
}
.fake-select--siding {
  width: 144px;
  height: 36px;
  margin-top: 21px;
  padding: 0 10px 0 8px;
  border: 1px solid #ddd;
  background: linear-gradient(#f0f0f0, #dedede);
  font-size: 22px;
}

/* round buttons over the conversation */
.forward {
  position: absolute;
  width: 95px;
  height: 95px;
  border-radius: 50%;
  background: rgba(0, 0, 0, .17);
}
.forward--one {
  left: 132px;
  top: 396px;
}
.forward--two {
  left: 853px;
  top: 1197px;
}
.scroll-down {
  position: absolute;
  left: 947px;
  top: 1372px;
  display: flex;
  align-items: center;
  justify-content: center;
  width: 98px;
  height: 98px;
  padding-top: 2px;
  border-radius: 50%;
  background: #f7f6f5;
  box-shadow: 0 2px 4px rgba(0, 0, 0, .12);
}

/* message composer */
.composer {
  position: relative;
  display: flex;
  align-items: center;
  flex: 1;
  padding: 0 13px 4px 15px;
}
.composer__bar {
  display: flex;
  align-items: center;
  width: 894px;
  height: 136px;
  padding: 0 37px 0 32px;
  border-radius: 68px;
  background: #fff;
  box-shadow: 0 1px 2px rgba(0, 0, 0, .3);
}
.composer__placeholder {
  flex: 1;
  margin-left: 34px;
  padding-top: 4px;
  font-size: 54px;
  color: #c9c9c9;
  white-space: nowrap;
}
.ic-camera {
  display: flex;
  align-items: center;
  justify-content: center;
  width: 60px;
  height: 58px;
  margin-left: 70px;
  border-radius: 14px;
  background: #898e93;
}
.ic-camera i {
  width: 34px;
  height: 34px;
  border: 4px solid #fff;
  border-radius: 50%;
}
.composer__mic {
  display: flex;
  align-items: center;
  justify-content: center;
  width: 141px;
  height: 141px;
  margin-left: 17px;
  border-radius: 50%;
  background: #038878;
  box-shadow: 0 2px 4px rgba(0, 0, 0, .25);
}
```
